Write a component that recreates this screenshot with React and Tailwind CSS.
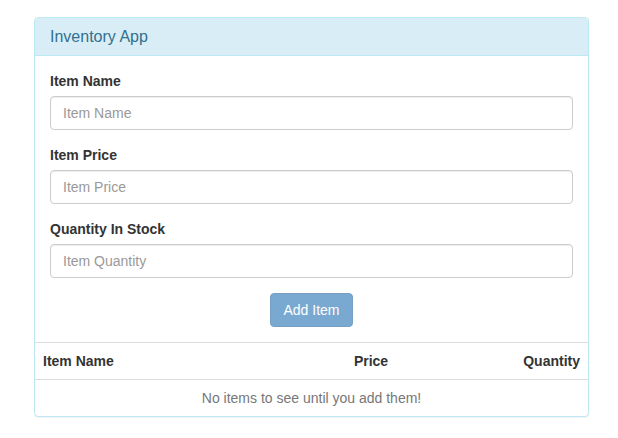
import React from 'react';

const Field = ({ label, placeholder }) => (
  <div className="mb-[15px]">
    <label className="block mb-[5px] text-[14px] leading-[20px] font-bold text-[#333]">{label}</label>
    <input
      type="text"
      placeholder={placeholder}
      className="block w-full h-[34px] px-3 py-1.5 text-[14px] leading-[20px] text-[#555] bg-white border border-[#ccc] rounded-[4px] shadow-[inset_0_1px_1px_rgba(0,0,0,0.075)] placeholder:text-[#999] outline-none"
    />
  </div>
);

const App = () => {
  return (
    <div className="min-h-screen bg-white pt-[17px] pl-[34px] font-['Liberation_Sans',Arial,sans-serif] text-[14px] text-[#333]">
      <div className="w-[555px] bg-white border border-[#bce8f1] rounded-[4px] shadow-[0_1px_1px_rgba(0,0,0,0.05)]">
        {/* Heading */}
        <div className="px-[15px] py-[10px] bg-[#d9edf7] border-b border-[#bce8f1] rounded-t-[3px] text-[#31708f] text-[16px] leading-[17px]">
          Inventory App
        </div>

        {/* Form */}
        <div className="p-[15px]">
          <Field label="Item Name" placeholder="Item Name" />
          <Field label="Item Price" placeholder="Item Price" />
          <Field label="Quantity In Stock" placeholder="Item Quantity" />
          <div className="flex justify-center">
            <button
              disabled
              className="px-3 py-1.5 text-[14px] leading-[20px] text-white bg-[#337ab7] border border-[#2e6da4] rounded-[4px] opacity-65 cursor-not-allowed"
            >
              Add Item
            </button>
          </div>
        </div>

        {/* Table */}
        <table className="w-full border-t border-[#ddd] border-collapse">
          <thead>
            <tr className="border-b border-[#ddd]">
              <th className="p-2 leading-[20px] text-left font-bold">Item Name</th>
              <th className="p-2 leading-[20px] text-right font-bold">Price</th>
              <th className="p-2 leading-[20px] text-right font-bold">Quantity</th>
            </tr>
          </thead>
          <tbody>
            <tr>
              <td colSpan={3} className="p-2 leading-[20px] text-center text-[#777]">
                No items to see until you add them!
              </td>
            </tr>
          </tbody>
        </table>
      </div>
    </div>
  );
};

export default App;
